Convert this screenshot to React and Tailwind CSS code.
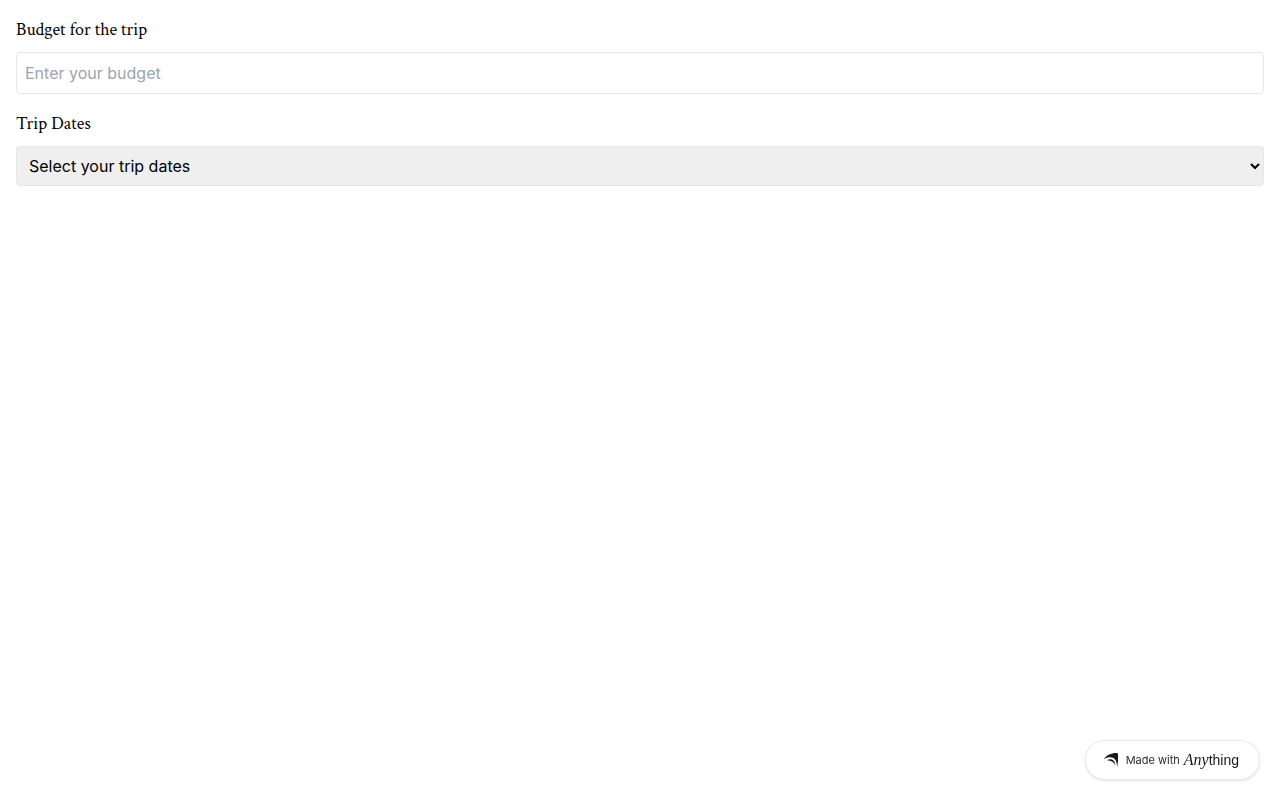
import { useState } from "react";

function Field({ id, label, children }) {
  return (
    <div>
      <label htmlFor={id} className="block mb-2 text-lg text-black font-['Crimson_Text','Liberation_Serif',serif]">
        {label}
      </label>
      {children}
    </div>
  );
}

function MadeWithBadge() {
  return (
    <a
      href="#"
      className="fixed right-5 bottom-5 flex h-10 items-center rounded-full border border-[#ebebeb] bg-white pl-[18px] pr-5 text-[#18191b] shadow-sm"
    >
      <svg viewBox="0 0 14 14" className="mr-2 size-3.5" fill="currentColor" aria-hidden="true">
        <path d="M0 6C2.6 2 7 .1 12.6 0c.8 0 1.2.3 1.3 1 .4 4.6.1 9.4-.9 13.4C13.2 9 11.6 6 9 4.8 6.4 3.7 3.4 4.2 0 6Z" />
        <path d="M3 7.2C6.2 5 11 6.4 11.4 12.4 10.2 9.4 7.6 7.6 3 7.2Z" />
      </svg>
      <span className="mr-1 text-[11px] text-[#2b2c30]">Made with</span>
      <span className="flex items-baseline leading-5">
        <span className="text-base italic font-['Liberation_Serif',serif]">Any</span>
        <span className="text-sm font-['Liberation_Sans',sans-serif]">thing</span>
      </span>
    </a>
  );
}

function App() {
  const [budget, setBudget] = useState("");
  const [dates, setDates] = useState("");

  return (
    <div className="min-h-screen bg-white font-['Inter',sans-serif]">
      <form className="flex flex-col gap-4 p-4">
        <Field id="budget" label="Budget for the trip">
          <input
            id="budget"
            type="text"
            placeholder="Enter your budget"
            value={budget}
            onChange={(e) => setBudget(e.target.value)}
            className="block w-full rounded border border-[#e5e7eb] p-2 placeholder:text-[#9ca3af]"
          />
        </Field>
        <Field id="dates" label="Trip Dates">
          <select
            id="dates"
            value={dates}
            onChange={(e) => setDates(e.target.value)}
            className="block h-10 w-full rounded border border-[#e5e7eb] bg-[#efefef] p-2 text-black"
          >
            <option value="">Select your trip dates</option>
          </select>
        </Field>
      </form>
      <MadeWithBadge />
    </div>
  );
}

export default App;
